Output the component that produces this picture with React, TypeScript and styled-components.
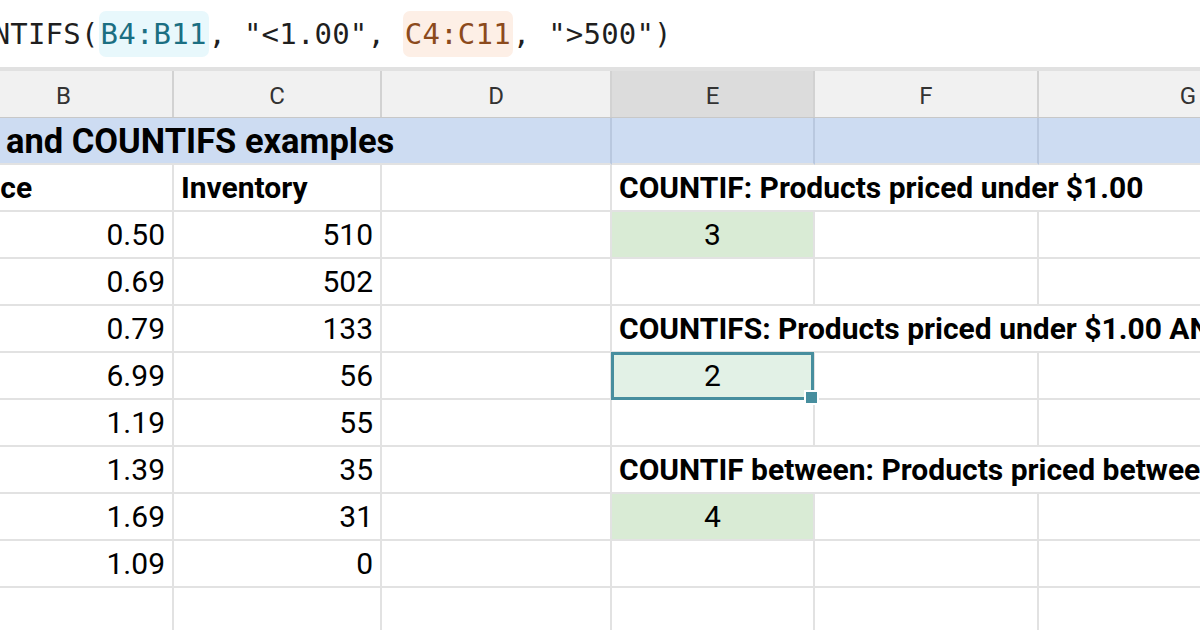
import { Fragment } from 'react';
import styled, { createGlobalStyle } from 'styled-components';

const GlobalStyle = createGlobalStyle`
  html, body {
    margin: 0;
    padding: 0;
    background: #ffffff;
    overflow: hidden;
  }
  body {
    font-family: Roboto, 'Liberation Sans', Arial, sans-serif;
    color: #000000;
  }
`;

const COLUMNS = '106px 219px 208px 230px 203px 224px 300px';

const Page = styled.div`
  width: 1200px;
  height: 630px;
  overflow: hidden;
  display: flex;
  flex-direction: column;
`;

const FormulaBar = styled.div`
  height: 67px;
  flex: none;
  display: flex;
  align-items: center;
  border-bottom: 4px solid #e1e1e1;
  overflow: hidden;
  white-space: nowrap;
`;

const Formula = styled.div`
  margin-left: -78px;
  font-family: 'DejaVu Sans Mono', 'Liberation Mono', monospace;
  font-size: 29px;
  letter-spacing: 0.2px;
  color: #1f1f1f;
`;

const Range = styled.span<{ $tone: 'blue' | 'orange' }>`
  padding: 6px 2px;
  border-radius: 7px;
  background: ${(p) => (p.$tone === 'blue' ? '#e8f8fc' : '#fdefe6')};
  color: ${(p) => (p.$tone === 'blue' ? '#1b6f82' : '#8c4a1c')};
`;

const Grid = styled.div`
  flex: none;
  display: grid;
  grid-template-columns: ${COLUMNS};
  margin-left: -151px;
`;

const HeaderRow = styled(Grid)`
  height: 46px;
  border-bottom: 1px solid #c8c8c8;
  background: #f1f1f1;
`;

const ColHeader = styled.div<{ $active?: boolean }>`
  display: flex;
  align-items: center;
  justify-content: center;
  padding-top: 3px;
  border-right: 2px solid #d2d2d2;
  background: ${(p) => (p.$active ? '#dcdcdc' : '#f1f1f1')};
  font-size: 24px;
  color: #333333;
`;

const Body = styled(Grid)`
  grid-auto-rows: 47px;
`;

const Cell = styled.div<{
  $align?: 'left' | 'right' | 'center';
  $bold?: boolean;
  $fill?: string;
  $span?: number;
  $line?: string;
}>`
  position: relative;
  display: flex;
  align-items: center;
  justify-content: ${(p) =>
    p.$align === 'right' ? 'flex-end' : p.$align === 'center' ? 'center' : 'flex-start'};
  grid-column: span ${(p) => p.$span ?? 1};
  padding: 0 7px 0 7px;
  border-right: 2px solid ${(p) => p.$line ?? '#e2e2e2'};
  border-bottom: 2px solid #e2e2e2;
  background: ${(p) => p.$fill ?? '#ffffff'};
  font-size: 30px;
  font-weight: ${(p) => (p.$bold ? 700 : 400)};
  white-space: nowrap;
  overflow: hidden;
`;

const TitleCell = styled(Cell)`
  font-size: 34.5px;
  padding-left: 5px;
`;

const Selected = styled(Cell)`
  overflow: visible;
  &::after {
    content: '';
    position: absolute;
    left: -1px;
    top: -1px;
    right: -1px;
    bottom: -2px;
    border: 3px solid #478e9e;
    pointer-events: none;
  }
  &::before {
    content: '';
    position: absolute;
    right: -6px;
    bottom: -7px;
    width: 11px;
    height: 11px;
    background: #478e9e;
    border: 2px solid #ffffff;
    z-index: 2;
  }
`;

const BLUE = '#cddcf2';
const BLUE_LINE = '#b9c8df';
const GREEN = '#d9ebd5';

const rows = [
  ['Price', 'Inventory'],
  ['0.50', '510'],
  ['0.69', '502'],
  ['0.79', '133'],
  ['6.99', '56'],
  ['1.19', '55'],
  ['1.39', '35'],
  ['1.69', '31'],
  ['1.09', '0'],
  ['', ''],
];

const labels: Record<number, string> = {
  0: 'COUNTIF: Products priced under $1.00',
  3: 'COUNTIFS: Products priced under $1.00 AND inventory over 500',
  6: 'COUNTIF between: Products priced between $1.00 and $1.50',
};

const results: Record<number, string> = { 1: '3', 7: '4' };

function RightSide({ row }: { row: number }) {
  if (labels[row]) {
    return (
      <Cell $bold $span={3}>
        {labels[row]}
      </Cell>
    );
  }
  let first = <Cell />;
  if (results[row]) {
    first = (
      <Cell $align="center" $fill={GREEN}>
        {results[row]}
      </Cell>
    );
  } else if (row === 4) {
    first = (
      <Selected $align="center" $fill="#e2f1e6">
        2
      </Selected>
    );
  }
  return (
    <>
      {first}
      <Cell />
      <Cell />
    </>
  );
}

export default function App() {
  return (
    <>
      <GlobalStyle />
      <Page>
        <FormulaBar>
          <Formula>
            =COUNTIFS(<Range $tone="blue">B4:B11</Range>, "&lt;1.00",{' '}
            <Range $tone="orange">C4:C11</Range>, "&gt;500")
          </Formula>
        </FormulaBar>
        <HeaderRow>
          {['A', 'B', 'C', 'D', 'E', 'F', 'G'].map((c) => (
            <ColHeader key={c} $active={c === 'E'}>
              {c}
            </ColHeader>
          ))}
        </HeaderRow>
        <Body>
          <TitleCell $bold $span={4} $fill={BLUE} $line={BLUE_LINE}>
            COUNTIF and COUNTIFS examples
          </TitleCell>
          <Cell $fill={BLUE} $line={BLUE_LINE} />
          <Cell $fill={BLUE} $line={BLUE_LINE} />
          <Cell $fill={BLUE} $line={BLUE_LINE} />
          {rows.map(([price, stock], i) => (
            <Fragment key={i}>
              <Cell />
              <Cell $align={i === 0 ? 'left' : 'right'} $bold={i === 0}>
                {price}
              </Cell>
              <Cell $align={i === 0 ? 'left' : 'right'} $bold={i === 0}>
                {stock}
              </Cell>
              <Cell />
              <RightSide row={i} />
            </Fragment>
          ))}
        </Body>
      </Page>
    </>
  );
}
